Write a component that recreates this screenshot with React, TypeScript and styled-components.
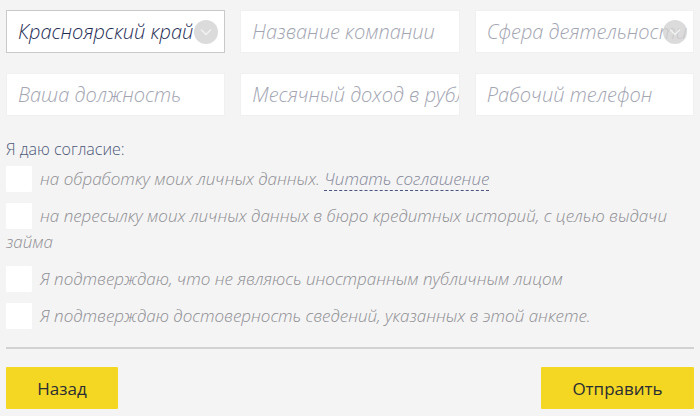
import styled, { createGlobalStyle } from "styled-components";

const GlobalStyle = createGlobalStyle`
  html, body {
    margin: 0;
    padding: 0;
    background: #f4f4f4;
    font-family: "Open Sans", "Noto Sans", sans-serif;
  }
`;

const fields = [
  { text: "Красноярский край", value: true, select: true },
  { text: "Название компании" },
  { text: "Сфера деятельности", select: true },
  { text: "Ваша должность" },
  { text: "Месячный доход в рублях" },
  { text: "Рабочий телефон" },
];

const agreements = [
  { text: "на обработку моих личных данных.", link: "Читать соглашение" },
  { text: "на пересылку моих личных данных в бюро кредитных историй, с целью выдачи займа" },
  { text: "Я подтверждаю, что не являюсь иностранным публичным лицом" },
  { text: "Я подтверждаю достоверность сведений, указанных в этой анкете." },
];

const App = () => {
  return (
    <>
      <GlobalStyle />
      <Form>
        <FieldGrid>
          {fields.map((f) => (
            <Field key={f.text} $active={!!f.value}>
              <FieldText $value={!!f.value}>{f.text}</FieldText>
              {f.select && (
                <SelectArrow>
                  <svg width="12" height="8" viewBox="0 0 12 8" fill="none">
                    <path d="M1 1.5l5 5 5-5" stroke="#f3f3f3" strokeWidth="1.3" />
                  </svg>
                </SelectArrow>
              )}
            </Field>
          ))}
        </FieldGrid>

        <ConsentTitle>Я даю согласие:</ConsentTitle>
        <ConsentList>
          {agreements.map((a) => (
            <ConsentRow key={a.text}>
              <CheckBox />
              {a.text}
              {a.link && (
                <>
                  {" "}
                  <ReadLink>{a.link}</ReadLink>
                </>
              )}
            </ConsentRow>
          ))}
        </ConsentList>

        <Divider />

        <ButtonRow>
          <Button $wide={false}>Назад</Button>
          <Button $wide>Отправить</Button>
        </ButtonRow>
      </Form>
    </>
  );
};

const Form = styled.div`
  padding: 10px 6px 6px;
  width: 700px;
  box-sizing: border-box;
`;

const FieldGrid = styled.div`
  display: grid;
  grid-template-columns: repeat(3, 1fr);
  column-gap: 15px;
  row-gap: 20px;
`;

const Field = styled.div<{ $active: boolean }>`
  position: relative;
  height: 43px;
  background: #fff;
  border: 1px solid ${(p) => (p.$active ? "#c9c9c9" : "#f0f0f0")};
  box-sizing: border-box;
  display: flex;
  align-items: center;
  padding: 0 11px;
  overflow: hidden;
`;

const FieldText = styled.span<{ $value: boolean }>`
  font-style: italic;
  font-weight: 300;
  font-size: 20px;
  white-space: nowrap;
  color: ${(p) => (p.$value ? "#1f2d55" : "#a3a5b2")};
`;

const SelectArrow = styled.span`
  position: absolute;
  right: 6px;
  top: 50%;
  transform: translateY(-50%);
  width: 24px;
  height: 24px;
  border-radius: 50%;
  background: rgba(210, 210, 210, 0.8);
  display: flex;
  align-items: center;
  justify-content: center;
`;

const ConsentTitle = styled.div`
  margin-top: 22px;
  font-size: 16px;
  font-weight: 300;
  color: #4d5878;
`;

const ConsentList = styled.div`
  margin-top: 6px;
  display: flex;
  flex-direction: column;
  gap: 11px;
`;

const ConsentRow = styled.div`
  font-style: italic;
  font-weight: 300;
  font-size: 17px;
  line-height: 26px;
  color: #8e8e93;
`;

const CheckBox = styled.span`
  display: inline-block;
  width: 26px;
  height: 26px;
  background: #fff;
  vertical-align: top;
  margin-right: 8px;
  border-radius: 1px;
`;

const ReadLink = styled.span`
  color: #85889a;
  border-bottom: 1px dashed #4a5580;
`;

const Divider = styled.hr`
  margin: 18px 0 18px;
  border: none;
  border-top: 2px solid #d2d2d2;
`;

const ButtonRow = styled.div`
  display: flex;
  justify-content: space-between;
`;

const Button = styled.button<{ $wide: boolean }>`
  width: ${(p) => (p.$wide ? "153px" : "112px")};
  height: 42px;
  border: none;
  border-radius: 1px;
  background: #f4d723;
  color: #2a2d33;
  font-family: "Open Sans", sans-serif;
  font-size: 17px;
`;

export default App;
